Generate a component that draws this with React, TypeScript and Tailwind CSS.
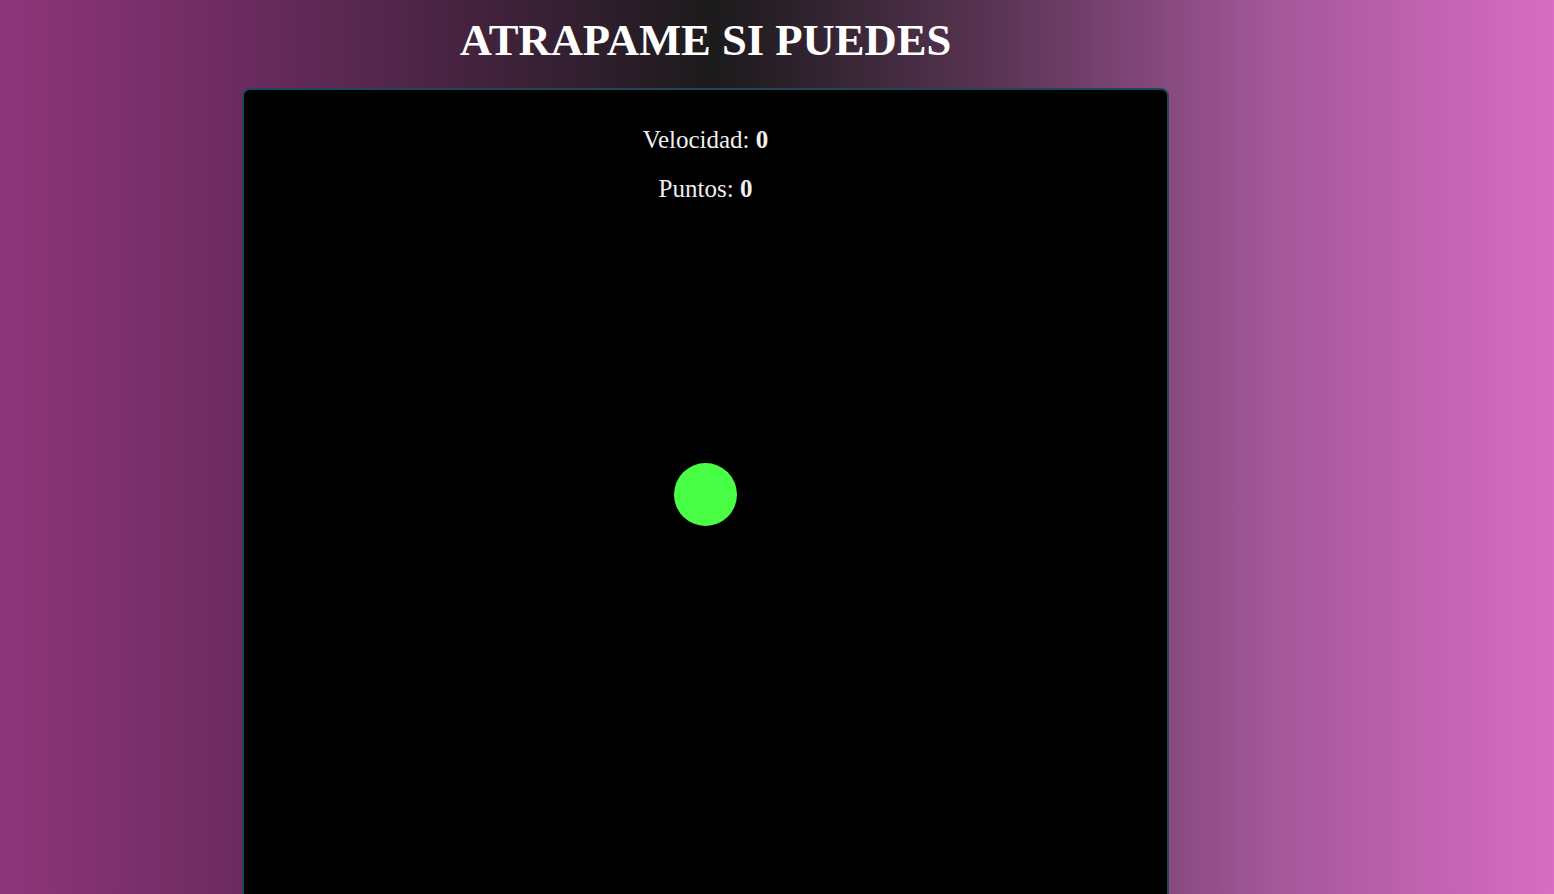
import React from "react";

const App = () => {
  return (
    <div className="min-h-[894px] h-[894px] overflow-hidden bg-[linear-gradient(to_right,#8f357a_0%,#6a2b5f_16%,#1b1a1b_46%,#5a3454_64%,#a4579a_82%,#d86cc2_100%)] font-['Liberation_Serif',serif]">
      <div className="ml-[242px] w-[927px]">
        <h1 className="pt-[14px] text-center text-[44.6px] leading-[52px] font-bold text-white">
          ATRAPAME SI PUEDES
        </h1>
        <div className="relative mt-[22px] h-[900px] rounded-lg border-2 border-[#1d4a55] bg-black">
          <div className="pt-[36px] text-center text-[25px] text-[#f0eef0]">
            <p className="leading-[28px]">
              Velocidad: <b>0</b>
            </p>
            <p className="mt-[21px] leading-[28px]">
              Puntos: <b>0</b>
            </p>
          </div>
          <div className="absolute left-[430px] top-[373px] h-[63px] w-[63px] rounded-full bg-[#48ff45]" />
        </div>
      </div>
    </div>
  );
};

export default App;
